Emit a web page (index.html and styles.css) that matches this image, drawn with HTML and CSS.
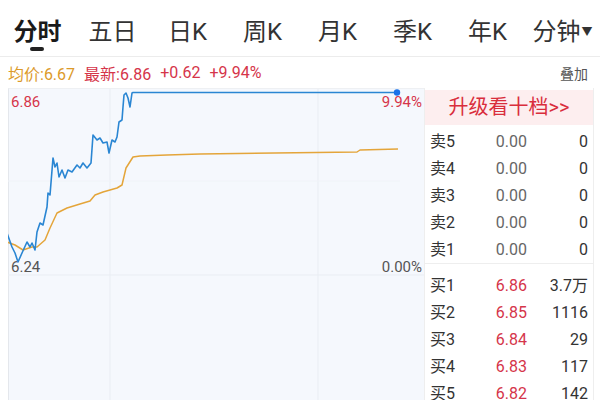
FILE: index.html
```html
<!DOCTYPE html>
<html lang="zh-CN">
<head>
  <meta charset="UTF-8" />
  <meta name="viewport" content="width=device-width, initial-scale=1" />
  <title>分时</title>
  <link rel="stylesheet" href="styles.css">
</head>
<body>
  <nav class="tabs">
    <div class="tab active">分时</div>
    <div class="tab">五日</div>
    <div class="tab">日K</div>
    <div class="tab">周K</div>
    <div class="tab">月K</div>
    <div class="tab">季K</div>
    <div class="tab">年K</div>
    <div class="tab">分钟<span class="caret">▼</span></div>
  </nav>

  <div class="info">
    <span class="avg">均价:6.67</span>
    <span class="up">最新:6.86</span>
    <span class="up">+0.62</span>
    <span class="up">+9.94%</span>
    <span class="overlay">叠加</span>
  </div>

  <div class="main">
    <div class="chart">
      <svg class="lines" width="416" height="312" viewBox="8 88 416 312">
        <line x1="110" y1="89" x2="110" y2="400" class="grid" />
        <line x1="318" y1="89" x2="318" y2="400" class="grid" />
        <line x1="8" y1="181" x2="400" y2="181" class="grid faint" />
        <line x1="8" y1="275" x2="424" y2="275" class="grid" />
        <polyline class="avgline" points="7,242 15,245 23,250 32,247 37,247 45,240 50,228 57,213 67,208 80,204 90,201 95,195 103,192 117,188 122,185 126,168 133,157 140,156 167,155 200,154 357,152 360,150 398,149" />
        <polyline class="priceline" points="7,233 12,247 15,253 18,262 22,253 27,242 30,247 32,243 35,250 37,232 40,223 43,225 47,207 48,193 50,195 53,158 55,167 57,163 59,177 62,170 65,178 68,170 72,172 77,165 80,168 83,163 87,168 91,163 93,135 97,140 100,138 103,143 107,142 109,153 112,140 115,142 117,137 119,122 122,120 123,107 124,95 126,93 128,98 130,107 132,93 133,92.5 397,92.5" />
        <circle cx="397" cy="92.5" r="3.2" fill="#1a73e8" />
      </svg>
      <div class="label top-left up">6.86</div>
      <div class="label top-right up">9.94%</div>
      <div class="label mid-left">6.24</div>
      <div class="label mid-right">0.00%</div>
    </div>

    <div class="book">
      <div class="upgrade">升级看十档&gt;&gt;</div>
      <div class="rows">
        <div class="row"><span>卖5</span><span class="price">0.00</span><span class="vol">0</span></div>
        <div class="row"><span>卖4</span><span class="price">0.00</span><span class="vol">0</span></div>
        <div class="row"><span>卖3</span><span class="price">0.00</span><span class="vol">0</span></div>
        <div class="row"><span>卖2</span><span class="price">0.00</span><span class="vol">0</span></div>
        <div class="row"><span>卖1</span><span class="price">0.00</span><span class="vol">0</span></div>
      </div>
      <div class="rows buy">
        <div class="row"><span>买1</span><span class="price up">6.86</span><span class="vol">3.7万</span></div>
        <div class="row"><span>买2</span><span class="price up">6.85</span><span class="vol">1116</span></div>
        <div class="row"><span>买3</span><span class="price up">6.84</span><span class="vol">29</span></div>
        <div class="row"><span>买4</span><span class="price up">6.83</span><span class="vol">117</span></div>
        <div class="row"><span>买5</span><span class="price up">6.82</span><span class="vol">142</span></div>
      </div>
    </div>
  </div>
</body>
</html>
```

FILE: styles.css
```css
body {
  margin: 0;
  padding: 0;
  width: 600px;
  height: 400px;
  overflow: hidden;
  background: #fff;
  color: #333;
  font-family: Roboto, "Noto Sans CJK SC", sans-serif;
}
.tabs {
  display: flex;
  height: 56px;
  border-bottom: 1px solid #ececec;
}
.tab {
  flex: 0 0 75px;
  text-align: center;
  font-size: 24px;
  line-height: 64px;
  color: #333;
  position: relative;
}
.tab.active {
  color: #1a1a1a;
  font-weight: 700;
}
.tab.active::after {
  content: "";
  position: absolute;
  left: 30px;
  top: 47px;
  width: 14px;
  height: 4px;
  border-radius: 2px;
  background: #222;
}
.caret {
  font-size: 11px;
  vertical-align: 4px;
  margin-left: 1px;
}
.info {
  display: flex;
  align-items: center;
  height: 31px;
  padding-left: 8px;
  font-size: 16px;
}
.info span {
  margin-right: 9px;
}
.avg {
  color: #dc9a2a;
}
.up {
  color: #d5354a;
}
.overlay {
  margin-left: auto;
  margin-right: 12px !important;
  font-size: 14px;
  color: #555;
}
.main {
  display: flex;
}
.chart {
  position: relative;
  margin-left: 8px;
  width: 416px;
  height: 312px;
  background: #f5f8fd;
  border-left: 1px solid #e4e7ec;
  border-top: 1px solid #eef0f3;
  box-sizing: border-box;
}
.lines {
  position: absolute;
  left: -1px;
  top: -1px;
}
.grid {
  stroke: #e9edf3;
  stroke-width: 1;
}
.grid.faint {
  stroke: #f0f3f8;
}
.priceline {
  fill: none;
  stroke: #2a86d3;
  stroke-width: 1.6;
  stroke-linejoin: round;
}
.avgline {
  fill: none;
  stroke: #e4a53a;
  stroke-width: 1.5;
  stroke-linejoin: round;
}
.label {
  position: absolute;
  font-size: 15px;
  line-height: 16px;
  color: #555;
}
.label.up {
  color: #d5354a;
}
.top-left {
  left: 2px;
  top: 5px;
}
.top-right {
  right: 2px;
  top: 5px;
}
.mid-left {
  left: 2px;
  top: 170px;
}
.mid-right {
  right: 2px;
  top: 170px;
}
.book {
  width: 170px;
  border-left: 1px solid #eee;
  border-right: 1px solid #eee;
  box-sizing: border-box;
  height: 312px;
}
.upgrade {
  margin-top: 2px;
  height: 35px;
  line-height: 35px;
  background: #fdeeef;
  color: #d92d3c;
  font-size: 20px;
  text-align: center;
}
.rows {
  padding: 3px 5px 0 5px;
}
.rows.buy {
  border-top: 1px solid #eee;
  padding-top: 8px;
}
.row {
  display: grid;
  grid-template-columns: 40px 57px 1fr;
  height: 27px;
  line-height: 27px;
  font-size: 16px;
  color: #333;
}
.price {
  text-align: right;
  color: #666;
}
.price.up {
  color: #d5354a;
}
.vol {
  text-align: right;
}
```
